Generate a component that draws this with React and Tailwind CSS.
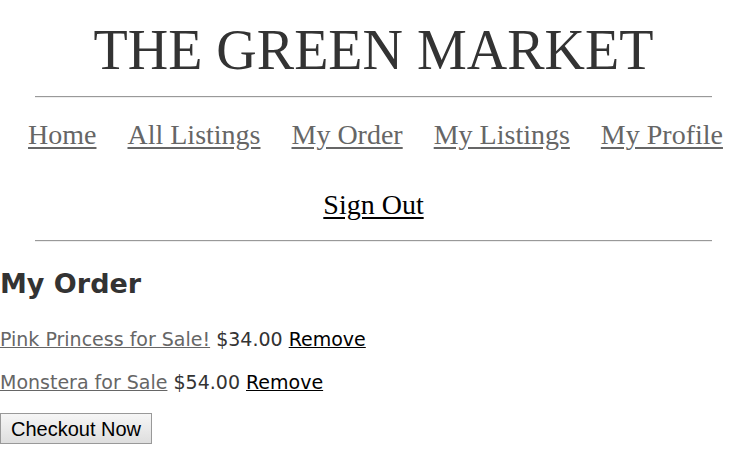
import React from "react";

const links = ["Home", "All Listings", "My Order", "My Listings", "My Profile"];

const orderItems = [
    { title: "Pink Princess for Sale!", price: "$34.00" },
    { title: "Monstera for Sale", price: "$54.00" },
];

const App = () => {
    return (
        <div className="min-h-screen bg-white">
            {/* header */}
            <header className="text-center">
                <h1 className="pt-[18px] pl-[6px] text-[56px] leading-[64px] text-[#333] font-['Liberation_Serif',serif]">
                    THE GREEN MARKET
                </h1>
                <hr className="ml-[35px] mr-[29px] mt-[14px] border-t border-b border-t-[#999] border-b-[#eee]" />
                <nav className="pt-[2px] font-['Liberation_Serif',serif] text-[28px] leading-[70px]">
                    <div className="flex justify-center gap-x-[31px] pl-[10px]">
                        {links.map((l) => (
                            <a key={l} href="#" className="text-[#666] underline underline-offset-[3px]">
                                {l}
                            </a>
                        ))}
                    </div>
                    <div className="flex justify-center pl-[6px]">
                        <a href="#" className="text-black underline underline-offset-[3px]">Sign Out</a>
                    </div>
                </nav>
                <hr className="ml-[35px] mr-[29px] border-t border-b border-t-[#999] border-b-[#eee]" />
            </header>

            {/* order */}
            <main className="font-['DejaVu_Sans',sans-serif] text-[#333]">
                <h2 className="mt-[26px] text-[27px] leading-[32px] font-bold">My Order</h2>
                <div className="mt-[18px]">
                    {orderItems.map((item) => (
                        <p key={item.title} className="text-[19px] leading-[43px]">
                            <a href="#" className="text-[#666] underline">{item.title}</a>{" "}
                            <span>{item.price}</span>{" "}
                            <a href="#" className="text-black underline">Remove</a>
                        </p>
                    ))}
                </div>
                <button className="mt-[9px] h-[31px] px-[10px] border border-[#999] bg-gradient-to-b from-[#f6f6f6] to-[#dedede] text-black text-[20px] font-['Liberation_Sans',sans-serif]">
                    Checkout Now
                </button>
            </main>
        </div>
    );
};

export default App;
